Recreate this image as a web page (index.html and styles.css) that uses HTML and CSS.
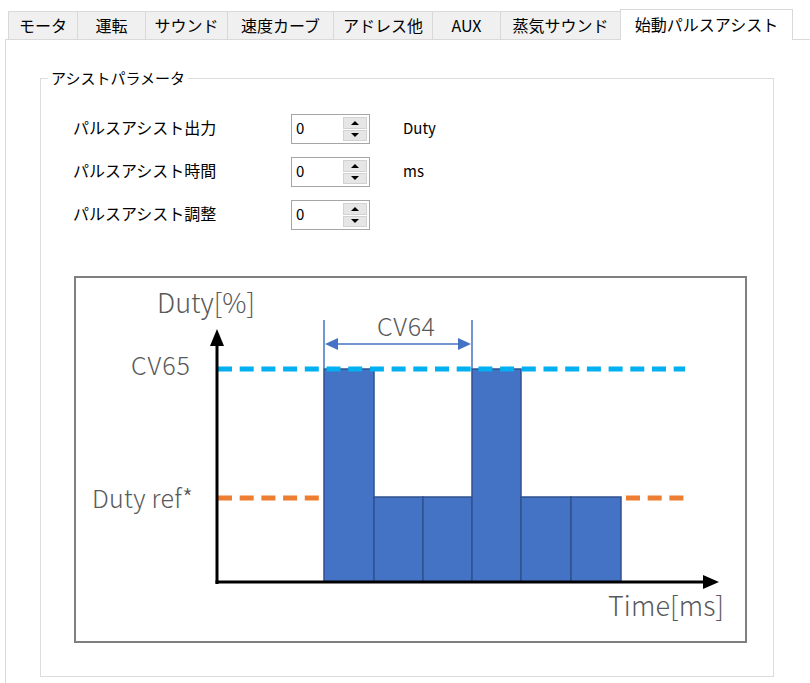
FILE: index.html
```html
<!DOCTYPE html>
<html lang="ja">
<head>
<meta charset="utf-8">
<title>始動パルスアシスト</title>
<link rel="stylesheet" href="styles.css">
</head>
<body>
<div class="tabs">
  <div class="tab t1">モータ</div>
  <div class="tab t2">運転</div>
  <div class="tab t3">サウンド</div>
  <div class="tab t4">速度カーブ</div>
  <div class="tab t5">アドレス他</div>
  <div class="tab t6">AUX</div>
  <div class="tab t7">蒸気サウンド</div>
  <div class="tab active">始動パルスアシスト</div>
</div>
<div class="panel">
  <fieldset class="group">
    <legend class="legend">アシストパラメータ</legend>
    <div class="params">
      <div class="row">
        <span class="lbl">パルスアシスト出力</span>
        <div class="spin"><span class="val">0</span><span class="btns"><span class="btn"><span class="up"></span></span><span class="btn"><span class="down"></span></span></span></div>
        <span class="unit">Duty</span>
      </div>
      <div class="row">
        <span class="lbl">パルスアシスト時間</span>
        <div class="spin"><span class="val">0</span><span class="btns"><span class="btn"><span class="up"></span></span><span class="btn"><span class="down"></span></span></span></div>
        <span class="unit">ms</span>
      </div>
      <div class="row">
        <span class="lbl">パルスアシスト調整</span>
        <div class="spin"><span class="val">0</span><span class="btns"><span class="btn"><span class="up"></span></span><span class="btn"><span class="down"></span></span></span></div>
      </div>
    </div>
    <div class="chart">
      <svg class="chart-svg" width="669" height="363" viewBox="76 277 669 363" xmlns="http://www.w3.org/2000/svg">
        <text class="ct lg" x="157" y="312" textLength="98">Duty[%]</text>
        <text class="ct md" x="131" y="374" textLength="59">CV65</text>
        <text class="ct md" x="92" y="507" textLength="101">Duty ref*</text>
        <text class="ct lg" x="608" y="615" textLength="116">Time[ms]</text>
        <text class="ct md" x="377" y="335" textLength="58">CV64</text>

        <g class="bars">
          <rect x="324" y="368" width="50" height="213"/>
          <rect x="374" y="496" width="49" height="85"/>
          <rect x="423" y="496" width="49" height="85"/>
          <rect x="472" y="368" width="49" height="213"/>
          <rect x="521" y="496" width="50" height="85"/>
          <rect x="571" y="496" width="50" height="85"/>
        </g>

        <line class="cyan" x1="218" y1="368" x2="685" y2="368"/>
        <line class="orange" x1="218" y1="497" x2="320" y2="497"/>
        <line class="orange" x1="626" y1="497" x2="685" y2="497"/>

        <line class="axis" x1="217" y1="583" x2="217" y2="342"/>
        <polygon class="arrow" points="217,328 210,345 224,345"/>
        <line class="axis" x1="215.5" y1="581" x2="705" y2="581"/>
        <polygon class="arrow" points="719,581 703,574 703,588"/>

        <line class="dim" x1="324" y1="319" x2="324" y2="368"/>
        <line class="dim" x1="472" y1="319" x2="472" y2="368"/>
        <line class="dim" x1="334" y1="343" x2="462" y2="343"/>
        <polygon class="dimhead" points="325,343 338,337 338,349"/>
        <polygon class="dimhead" points="471,343 458,337 458,349"/>
      </svg>
    </div>
  </fieldset>
</div>
</body>
</html>
```
FILE: styles.css
```css
html, body {
  margin: 0;
  padding: 0;
  background: #ffffff;
}
body {
  width: 810px;
  height: 683px;
  overflow: hidden;
  font-family: "Noto Sans CJK JP", "Noto Sans", sans-serif;
  color: #000000;
}

/* ---- tab strip ---- */
.tabs {
  display: flex;
  align-items: flex-end;
  height: 39px;
  margin-left: 8px;
  position: relative;
  z-index: 1;
}
.tab {
  box-sizing: border-box;
  height: 28px;
  border: 1px solid #d9d9d9;
  border-bottom: none;
  background: #f0f0f0;
  margin-right: -1px;
  font-size: 16px;
  line-height: 27px;
  text-align: center;
  white-space: nowrap;
}
.t1 { width: 70px; }
.t2 { width: 69px; }
.t3 { width: 83px; }
.t4 { width: 107px; }
.t5 { width: 100px; }
.t6 { width: 69px; }
.t7 { width: 121px; }
.tab.active {
  width: 173px;
  height: 31px;
  margin-bottom: -1px;
  background: #ffffff;
  line-height: 29px;
}

/* ---- tab page ---- */
.panel {
  box-sizing: border-box;
  margin-left: 5px;
  width: 810px;
  height: 644px;
  border: 1px solid #d9d9d9;
  border-bottom: none;
  border-right: none;
  background: #ffffff;
  padding-top: 1px;
}

/* ---- group box ---- */
.group {
  box-sizing: border-box;
  margin: 27px 0 0 34px;
  width: 734px;
  height: 609px;
  padding: 0;
  border: 1px solid #dcdcdc;
  min-width: 0;
}
.legend {
  margin-left: 7px;
  padding: 0 3px;
  font-size: 15px;
  line-height: 20px;
}

.params {
  display: flex;
  flex-direction: column;
  gap: 13px;
  padding: 26px 0 0 32px;
}
.row {
  display: flex;
  align-items: center;
  height: 30px;
}
.lbl {
  width: 218px;
  font-size: 16px;
  line-height: 20px;
  padding-bottom: 4px;
}
.spin {
  box-sizing: border-box;
  width: 79px;
  height: 30px;
  border: 1px solid #a5a5a5;
  display: flex;
  background: #ffffff;
}
.val {
  flex: 1;
  padding-left: 4px;
  font-size: 15px;
  line-height: 26px;
}
.btns {
  display: flex;
  flex-direction: column;
  width: 24px;
  margin: 2px 2px 2px 0;
  gap: 1px;
  background: #ffffff;
}
.btn {
  flex: 1;
  box-sizing: border-box;
  background: #e6e6e6;
  border: 1px solid #d2d2d2;
  display: flex;
  align-items: center;
  justify-content: center;
}
.up {
  width: 0;
  height: 0;
  border-left: 4px solid transparent;
  border-right: 4px solid transparent;
  border-bottom: 4px solid #000000;
}
.down {
  width: 0;
  height: 0;
  border-left: 4px solid transparent;
  border-right: 4px solid transparent;
  border-top: 4px solid #000000;
}
.unit {
  margin-left: 33px;
  font-size: 15px;
  line-height: 20px;
  padding-bottom: 3px;
}

/* ---- chart ---- */
.chart {
  box-sizing: border-box;
  margin: 46px 0 0 33px;
  width: 673px;
  height: 367px;
  border: 2px solid #7f7f7f;
  background: #ffffff;
}
.chart-svg {
  display: block;
}
.ct {
  fill: #595959;
  font-family: "Noto Sans CJK JP", "Noto Sans", sans-serif;
  font-weight: 300;
}
.lg { font-size: 27px; }
.md { font-size: 25px; }
.bars rect {
  fill: #4472c4;
  stroke: #2f528f;
  stroke-width: 1.5;
}
.cyan {
  stroke: #00b0f0;
  stroke-width: 5;
  stroke-dasharray: 14 7.7;
}
.orange {
  stroke: #ed7d31;
  stroke-width: 5;
  stroke-dasharray: 14 7.7;
}
.axis {
  stroke: #000000;
  stroke-width: 3;
}
.arrow {
  fill: #000000;
}
.dim {
  stroke: #4472c4;
  stroke-width: 1.5;
}
.dimhead {
  fill: #4472c4;
}
```
